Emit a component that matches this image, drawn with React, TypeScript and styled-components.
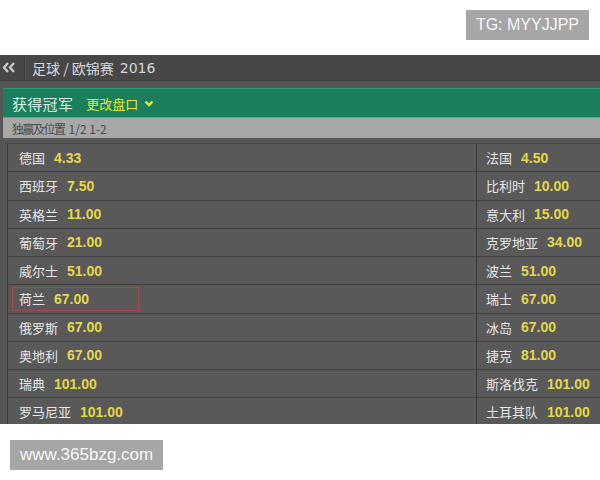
import styled, { createGlobalStyle } from "styled-components";

const GlobalStyle = createGlobalStyle`
  html, body {
    margin: 0;
    padding: 0;
    background: #ffffff;
  }
  body {
    width: 600px;
    height: 480px;
    overflow: hidden;
    font-family: "Noto Sans CJK SC", "Noto Sans", sans-serif;
  }
`;

const Page = styled.div`
  width: 600px;
  height: 480px;
  display: flex;
  flex-direction: column;
`;

const TopArea = styled.div`
  height: 55px;
  flex-shrink: 0;
  box-sizing: border-box;
  display: flex;
  justify-content: flex-end;
  align-items: flex-start;
  padding: 10px 11px 0 0;
`;

const Tag = styled.div`
  background: #a6a6a6;
  color: #f7f7f7;
  font-family: "Liberation Sans", Arial, sans-serif;
  font-size: ${(p: { size: number }) => p.size}px;
  height: 30px;
  display: flex;
  align-items: center;
  padding: 0 10px;
`;

const Panel = styled.div`
  height: 369px;
  flex-shrink: 0;
  overflow: hidden;
  background: #565656;
  display: flex;
  flex-direction: column;
`;

const Breadcrumb = styled.div`
  height: 25px;
  flex-shrink: 0;
  background: #474747;
  display: flex;
  align-items: stretch;
  border-bottom: 1px solid #3c3c3c;
`;

const BackButton = styled.div`
  width: 25px;
  box-sizing: border-box;
  display: flex;
  align-items: center;
  padding-left: 2px;
  border-right: 1px solid #3a3a3a;
  box-shadow: 1px 0 0 #565656;
`;

const Title = styled.div`
  display: flex;
  align-items: center;
  padding-left: 7px;
  color: #d6d6d6;
  font-size: 14px;
  gap: 3px;
`;

const Year = styled.span`
  font-family: "DejaVu Sans", sans-serif;
  font-size: 14px;
  margin-left: 3px;
`;

const Body = styled.div`
  flex-shrink: 0;
  padding: 7px 0 0 3px;
  display: flex;
  flex-direction: column;
`;

const MarketBar = styled.div`
  height: 29px;
  flex-shrink: 0;
  box-sizing: border-box;
  background: #1b7f5d;
  border-top: 1px solid #2c9a72;
  display: flex;
  align-items: center;
  padding-left: 9px;
`;

const MarketName = styled.span`
  color: #d9f2e4;
  font-size: 15px;
  letter-spacing: 0.3px;
`;

const ChangeLink = styled.span`
  color: #e2ec2e;
  font-size: 13px;
  margin-left: 13px;
  display: flex;
  align-items: center;
  gap: 6px;
`;

const SubBar = styled.div`
  height: 20px;
  flex-shrink: 0;
  background: #a8a8a8;
  border-top: 1px solid #8f8f8f;
  color: #4a4a4a;
  font-size: 12px;
  display: flex;
  align-items: center;
  padding-left: 9px;
  gap: 4px;
`;

const SubLabel = styled.span`
  letter-spacing: -1.5px;
`;

const Table = styled.div`
  flex-shrink: 0;
  margin-top: 5px;
  margin-left: 4px;
  border-left: 1px solid #3b3b3b;
  border-top: 1px solid #454545;
`;

const Row = styled.div`
  height: 28.25px;
  box-sizing: border-box;
  display: grid;
  grid-template-columns: 469px 1fr;
  border-bottom: 1px solid #3f3f3f;
  background: #595959;
`;

const Cell = styled.div<{ first?: boolean }>`
  display: flex;
  align-items: center;
  padding-left: ${(p) => (p.first ? 11 : 9)}px;
  border-right: ${(p) => (p.first ? "1px solid #383838" : "none")};
`;

const Selection = styled.span<{ marked?: boolean }>`
  display: flex;
  align-items: center;
  gap: 9px;
  box-sizing: border-box;
  ${(p) =>
    p.marked
      ? `
    width: 127px;
    height: 24px;
    margin-left: -7px;
    padding-left: 6px;
    border: 1px solid #a84848;
  `
      : ""}
`;

const Name = styled.span`
  color: #e6e6e6;
  font-size: 13px;
`;

const Odds = styled.span`
  color: #e4d846;
  font-family: "Liberation Sans", Arial, sans-serif;
  font-weight: bold;
  font-size: 14px;
`;

const Footer = styled.div`
  flex: 1;
  padding: 16px 0 0 10px;
  display: flex;
  align-items: flex-start;
`;

type Team = { name: string; odds: string; marked?: boolean };

const rows: [Team, Team][] = [
  [{ name: "德国", odds: "4.33" }, { name: "法国", odds: "4.50" }],
  [{ name: "西班牙", odds: "7.50" }, { name: "比利时", odds: "10.00" }],
  [{ name: "英格兰", odds: "11.00" }, { name: "意大利", odds: "15.00" }],
  [{ name: "葡萄牙", odds: "21.00" }, { name: "克罗地亚", odds: "34.00" }],
  [{ name: "威尔士", odds: "51.00" }, { name: "波兰", odds: "51.00" }],
  [{ name: "荷兰", odds: "67.00", marked: true }, { name: "瑞士", odds: "67.00" }],
  [{ name: "俄罗斯", odds: "67.00" }, { name: "冰岛", odds: "67.00" }],
  [{ name: "奥地利", odds: "67.00" }, { name: "捷克", odds: "81.00" }],
  [{ name: "瑞典", odds: "101.00" }, { name: "斯洛伐克", odds: "101.00" }],
  [{ name: "罗马尼亚", odds: "101.00" }, { name: "土耳其队", odds: "101.00" }],
];

const App: React.FC = () => {
  return (
    <Page>
      <GlobalStyle />
      <TopArea>
        <Tag size={16}>TG: MYYJJPP</Tag>
      </TopArea>
      <Panel>
        <Breadcrumb>
          <BackButton>
            <svg width="14" height="11" viewBox="0 0 14 11">
              <polyline points="6,1 2,5.5 6,10" fill="none" stroke="#c8c8c8" strokeWidth="2.4" />
              <polyline points="12,1 8,5.5 12,10" fill="none" stroke="#c8c8c8" strokeWidth="2.4" />
            </svg>
          </BackButton>
          <Title>
            足球 / 欧锦赛<Year>2016</Year>
          </Title>
        </Breadcrumb>
        <Body>
          <MarketBar>
            <MarketName>获得冠军</MarketName>
            <ChangeLink>
              更改盘口
              <svg width="10" height="7" viewBox="0 0 10 7">
                <polyline points="1.5,1.5 5,5 8.5,1.5" fill="none" stroke="#e2ec2e" strokeWidth="2.4" />
              </svg>
            </ChangeLink>
          </MarketBar>
          <SubBar>
            <SubLabel>独赢及位置</SubLabel>1/2 1-2
          </SubBar>
          <Table>
            {rows.map(([left, right]) => (
              <Row key={left.name}>
                <Cell first>
                  <Selection marked={left.marked}>
                    <Name>{left.name}</Name>
                    <Odds>{left.odds}</Odds>
                  </Selection>
                </Cell>
                <Cell>
                  <Selection>
                    <Name>{right.name}</Name>
                    <Odds>{right.odds}</Odds>
                  </Selection>
                </Cell>
              </Row>
            ))}
          </Table>
        </Body>
      </Panel>
      <Footer>
        <Tag size={17}>www.365bzg.com</Tag>
      </Footer>
    </Page>
  );
};

export default App;
